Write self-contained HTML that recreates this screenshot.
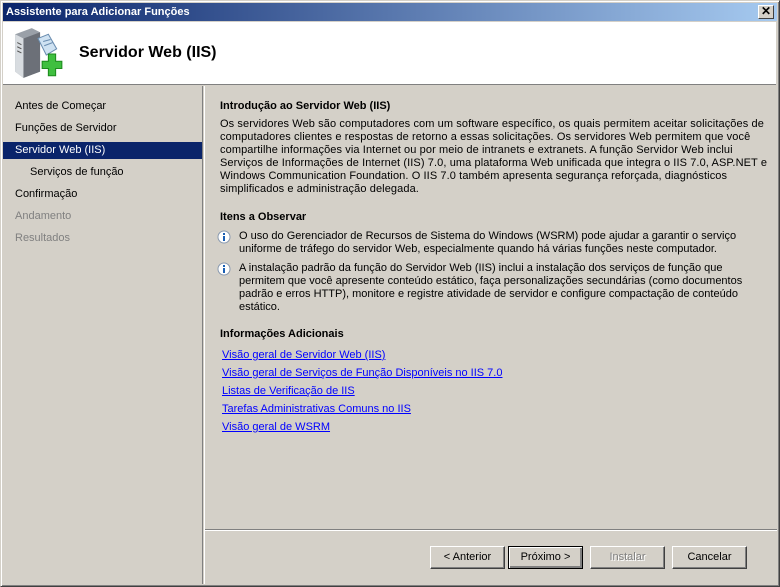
<!DOCTYPE html>
<html><head><meta charset="utf-8"><style>
*{margin:0;padding:0;box-sizing:border-box}
body{width:780px;height:587px;background:#d4d0c8;font-family:"Liberation Sans",Tahoma,sans-serif;font-size:11px;color:#000;position:relative;overflow:hidden}
.win{position:absolute;left:0;top:0;width:780px;height:587px;border:1px solid #d4d0c8;border-right-color:#404040;border-bottom-color:#404040;box-shadow:inset 1px 1px #fff,inset -1px -1px #808080}
.title{position:absolute;left:3px;top:3px;width:774px;height:18px;background:linear-gradient(90deg,#0a246a,#a6caf0);color:#fff;font-weight:bold;font-size:11px;line-height:18px;padding-left:3px}
.close{position:absolute;right:3px;top:2px;width:16px;height:14px;background:#d4d0c8;border:1px solid;border-color:#fff #404040 #404040 #fff;color:#000;font-size:12px;line-height:11px;text-align:center;font-weight:bold}
.head{position:absolute;left:3px;top:22px;width:773px;height:63px;background:#fff;border-bottom:1px solid #808080}
.head h1{position:absolute;left:76px;top:22px;font-size:16px;font-weight:bold}
.nav{position:absolute;left:3px;top:86px;width:200px;height:498px;border-right:1px solid #808080}
.sep{position:absolute;left:204px;top:86px;width:1px;height:498px;background:#fff}
.nav div{position:absolute;left:0;width:199px;height:17px;line-height:17px;padding-left:12px;white-space:nowrap}
.nav .sel{background:#0a246a;color:#fff}
.nav .dis{color:#808080}
.c{position:absolute;left:220px;white-space:nowrap;line-height:13px}
.b{font-weight:bold}
a{color:#0000ff;text-decoration:underline}
.info{position:absolute;left:217px;width:14px;height:14px}
.hr{position:absolute;left:205px;top:529px;width:572px;height:2px;border-top:1px solid #808080;border-bottom:1px solid #fff}
.btn{position:absolute;top:546px;width:75px;height:23px;border:1px solid;border-color:#fff #404040 #404040 #fff;box-shadow:inset -1px -1px #808080;text-align:center;line-height:21px}
.def{border:1px solid #000;box-shadow:inset 1px 1px #fff,inset -2px -2px #808080}
</style></head><body>
<div class="win"></div>
<div class="title">Assistente para Adicionar Funções<div class="close">✕</div></div>
<div class="head">
<svg style="position:absolute;left:10px;top:4px" width="50" height="56" viewBox="4 0 48 54">
<polygon points="6,8 22,2 30,6 30,44 14,50 6,44" fill="#9aa0a8"/>
<polygon points="6,8 14,12 14,50 6,44" fill="#d8dce0"/>
<polygon points="14,12 30,6 30,44 14,50" fill="#6c7078"/>
<line x1="8" y1="16" x2="12" y2="18" stroke="#555"/><line x1="8" y1="20" x2="12" y2="22" stroke="#555"/><line x1="8" y1="24" x2="12" y2="26" stroke="#555"/>
<polygon points="28,12 38,8 46,22 36,28" fill="#cfe2f2" stroke="#6a8db0"/>
<line x1="33" y1="15" x2="40" y2="13" stroke="#6a8db0"/><line x1="34" y1="19" x2="42" y2="16" stroke="#6a8db0"/>
<path d="M32 34h6v-7h7v7h6v7h-6v7h-7v-7h-6z" fill="#3fbf3f" stroke="#1d8a1d"/>
</svg>
<h1>Servidor Web (IIS)</h1></div>
<div class="nav">
<div style="top:12px">Antes de Começar</div>
<div style="top:34px">Funções de Servidor</div>
<div class="sel" style="top:56px">Servidor Web (IIS)</div>
<div style="top:78px;padding-left:27px">Serviços de função</div>
<div style="top:100px">Confirmação</div>
<div class="dis" style="top:122px">Andamento</div>
<div class="dis" style="top:144px">Resultados</div>
</div>
<div class="sep"></div>
<div class="c b" style="top:100px">Introdução ao Servidor Web (IIS)</div>
<div class="c" style="top:118px;letter-spacing:0.1px">Os servidores Web são computadores com um software específico, os quais permitem aceitar solicitações de<br>computadores clientes e respostas de retorno a essas solicitações. Os servidores Web permitem que você<br>compartilhe informações via Internet ou por meio de intranets e extranets. A função Servidor Web inclui<br>Serviços de Informações de Internet (IIS) 7.0, uma plataforma Web unificada que integra o IIS 7.0, ASP.NET e<br>Windows Communication Foundation. O IIS 7.0 também apresenta segurança reforçada, diagnósticos<br>simplificados e administração delegada.</div>
<div class="c b" style="top:211px">Itens a Observar</div>
<svg class="info" style="top:230px" viewBox="0 0 14 14"><circle cx="7" cy="7" r="6" fill="#fff" stroke="#8a9ab0"/><rect x="6" y="6" width="2" height="5" fill="#1a5fb4"/><rect x="6" y="3" width="2" height="2" fill="#1a5fb4"/></svg>
<div class="c" style="top:230px;left:239px">O uso do Gerenciador de Recursos de Sistema do Windows (WSRM) pode ajudar a garantir o serviço<br>uniforme de tráfego do servidor Web, especialmente quando há várias funções neste computador.</div>
<svg class="info" style="top:262px" viewBox="0 0 14 14"><circle cx="7" cy="7" r="6" fill="#fff" stroke="#8a9ab0"/><rect x="6" y="6" width="2" height="5" fill="#1a5fb4"/><rect x="6" y="3" width="2" height="2" fill="#1a5fb4"/></svg>
<div class="c" style="top:262px;left:239px">A instalação padrão da função do Servidor Web (IIS) inclui a instalação dos serviços de função que<br>permitem que você apresente conteúdo estático, faça personalizações secundárias (como documentos<br>padrão e erros HTTP), monitore e registre atividade de servidor e configure compactação de conteúdo<br>estático.</div>
<div class="c b" style="top:328px">Informações Adicionais</div>
<div class="c" style="top:349px;left:222px"><a>Visão geral de Servidor Web (IIS)</a></div>
<div class="c" style="top:367px;left:222px"><a>Visão geral de Serviços de Função Disponíveis no IIS 7.0</a></div>
<div class="c" style="top:385px;left:222px"><a>Listas de Verificação de IIS</a></div>
<div class="c" style="top:403px;left:222px"><a>Tarefas Administrativas Comuns no IIS</a></div>
<div class="c" style="top:421px;left:222px"><a>Visão geral de WSRM</a></div>
<div class="hr"></div>
<div class="btn" style="left:430px">&lt; Anterior</div>
<div class="btn def" style="left:508px">Próximo &gt;</div>
<div class="btn" style="left:590px;color:#808080;text-shadow:1px 1px #fff">Instalar</div>
<div class="btn" style="left:672px">Cancelar</div>
</body></html>
